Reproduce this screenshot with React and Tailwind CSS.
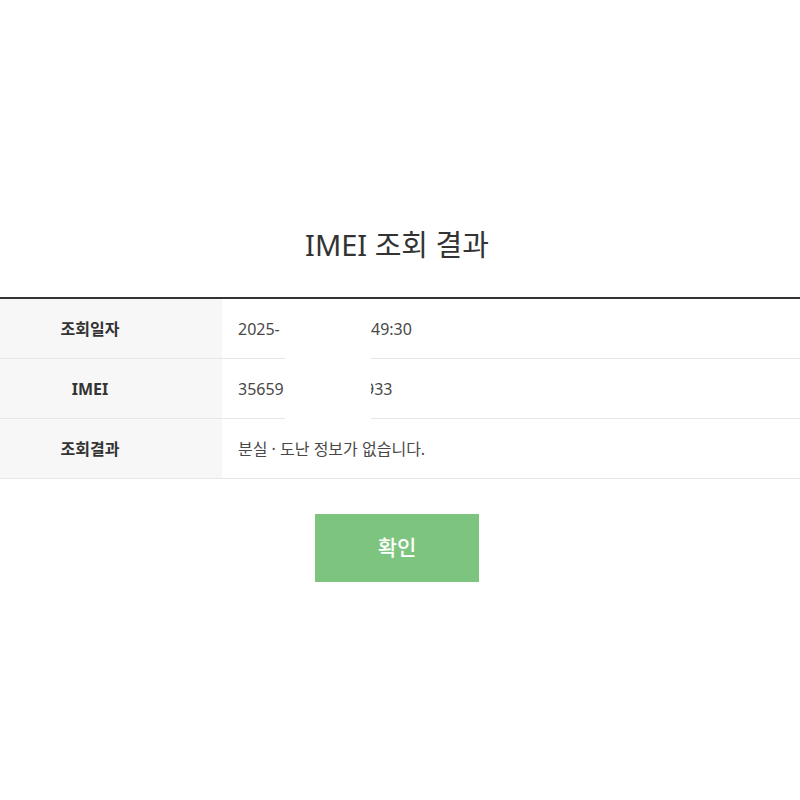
import React from 'react';

const rows = [
  { label: '조회일자', value: '2025-', tail: '49:30', tailShift: 'ml-[0px]' },
  { label: 'IMEI', value: '35659', tail: '933', tailShift: 'ml-[-6px]' },
  { label: '조회결과', value: '분실 · 도난 정보가 없습니다.' },
];

const App = () => {
  return (
    <div
      className="w-[800px] h-[800px] bg-white overflow-hidden text-[#333]"
      style={{ fontFamily: '"Noto Sans", "Noto Sans CJK KR", sans-serif' }}
    >
      <div className="pt-[224px] flex flex-col">
        {/* Title */}
        <h1 className="h-[42px] leading-[42px] text-[29px] font-normal text-center mr-[6px] text-[#333]">
          IMEI 조회 결과
        </h1>

        {/* Result table */}
        <div className="mt-[31px] border-t-2 border-[#333] relative">
          {rows.map((row, i) => (
            <div key={i} className="flex h-[60px] border-b border-[#e6e6e6]">
              <div className="w-[222px] shrink-0 bg-[#f7f7f7] flex items-center justify-center pr-[42px] text-[16px] font-bold text-[#333]">
                {row.label}
              </div>
              <div className="flex-1 flex items-center pl-[16px] text-[16px] text-[#484848]">
                {row.tail ? (
                  <>
                    <span className="w-[100px] overflow-hidden whitespace-nowrap">{row.value}</span>
                    <span className="w-[33px]" />
                    <span className={row.tailShift}>{row.tail}</span>
                  </>
                ) : (
                  row.value
                )}
              </div>
            </div>
          ))}
          {/* masked area */}
          <div className="absolute left-[285px] top-0 w-[86px] h-[121px] bg-white" />
        </div>

        {/* Confirm button */}
        <div className="flex justify-center mt-[35px] mr-[6px]">
          <button className="w-[164px] h-[68px] bg-[#7dc57f] text-white text-[21px] font-medium">
            확인
          </button>
        </div>
      </div>
    </div>
  );
};

export default App;
